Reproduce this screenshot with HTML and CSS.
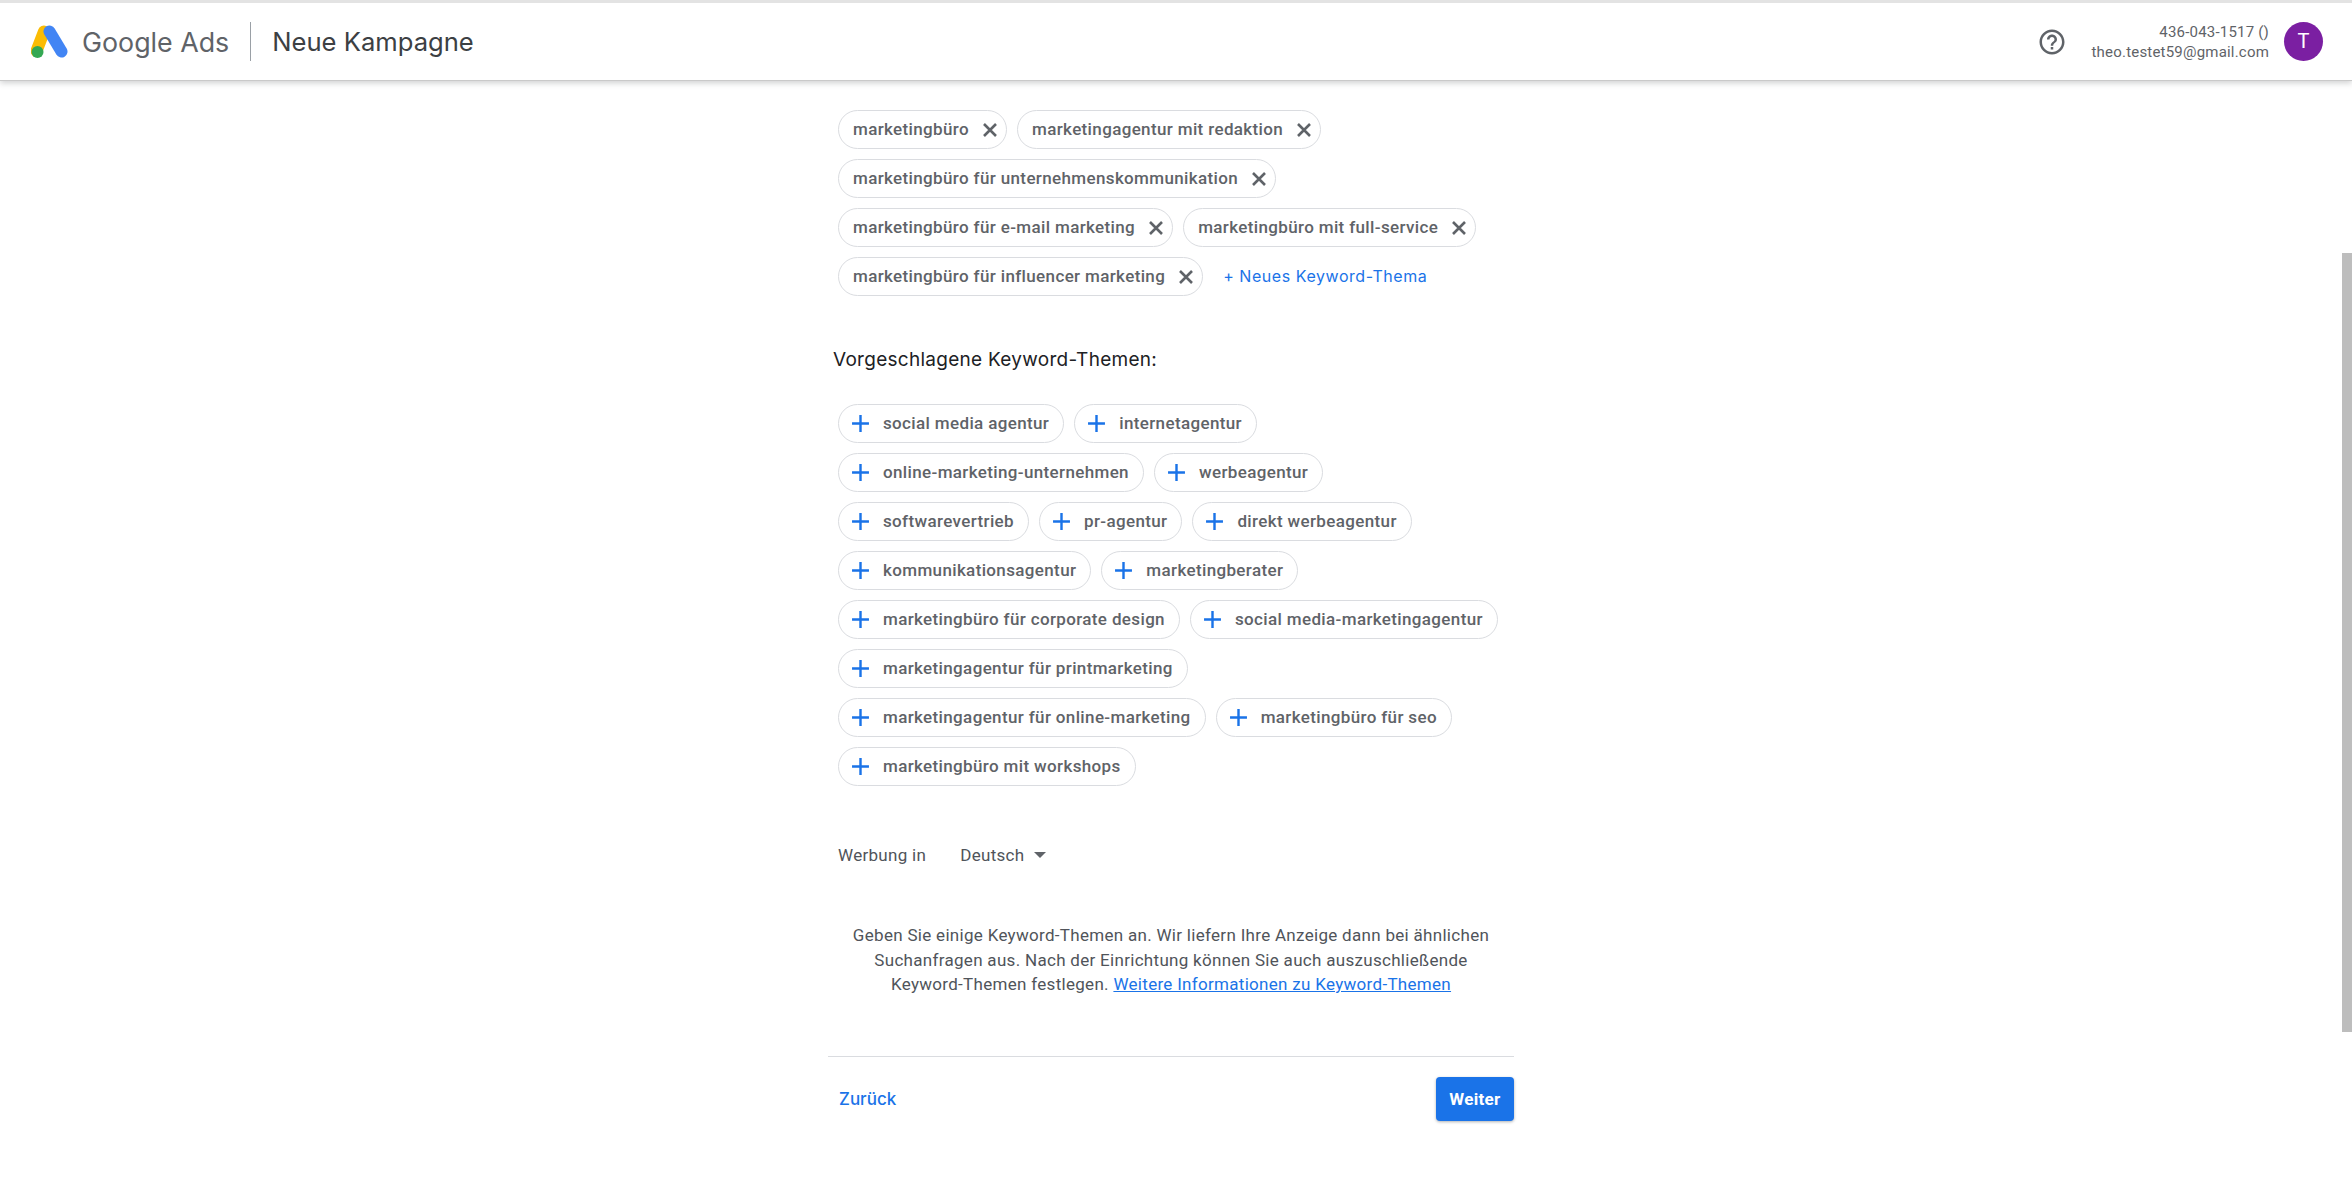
FILE: index.html
```html
<!DOCTYPE html>
<html lang="de">
<head>
  <meta charset="UTF-8">
  <meta name="viewport" content="width=device-width, initial-scale=1.0">
  <title>Neue Kampagne</title>
  <link rel="stylesheet" href="styles.css">
</head>
<body>
  <header class="topbar">
    <svg class="logo" viewBox="0 0 37 33" width="37" height="33">
      <line x1="13" y1="6.5" x2="5.5" y2="26" stroke="#fbbc04" stroke-width="12" stroke-linecap="round"/>
      <line x1="18.5" y1="6.5" x2="30.5" y2="26.5" stroke="#4285f4" stroke-width="12" stroke-linecap="round"/>
      <circle cx="6.5" cy="27" r="6" fill="#34a853"/>
    </svg>
    <span class="brand">Google Ads</span>
    <span class="divider"></span>
    <span class="title">Neue Kampagne</span>
    <svg class="help" viewBox="0 0 24 24" width="30" height="30">
      <path fill="#5f6368" d="M11 18h2v-2h-2v2zm1-16C6.48 2 2 6.48 2 12s4.48 10 10 10 10-4.48 10-10S17.52 2 12 2zm0 18c-4.41 0-8-3.59-8-8s3.59-8 8-8 8 3.59 8 8-3.59 8-8 8zm0-14c-2.21 0-4 1.79-4 4h2c0-1.1.9-2 2-2s2 .9 2 2c0 2-3 1.75-3 5h2c0-2.25 3-2.5 3-5 0-2.21-1.79-4-4-4z"/>
    </svg>
    <div class="account">
      <div>436-043-1517 ()</div>
      <div>theo.testet59@gmail.com</div>
    </div>
    <div class="avatar">T</div>
  </header>

  <div class="scrollbar"></div>

  <main class="content">
    <div class="panel">
      <div class="chips">
        <span class="chip chip-added">marketingbüro<svg viewBox="0 0 24 24" width="24" height="24"><path d="M6 6l12 12M18 6L6 18"/></svg></span>
        <span class="chip chip-added">marketingagentur mit redaktion<svg viewBox="0 0 24 24" width="24" height="24"><path d="M6 6l12 12M18 6L6 18"/></svg></span>
        <span class="chip chip-added">marketingbüro für unternehmenskommunikation<svg viewBox="0 0 24 24" width="24" height="24"><path d="M6 6l12 12M18 6L6 18"/></svg></span>
        <span class="chip chip-added">marketingbüro für e-mail marketing<svg viewBox="0 0 24 24" width="24" height="24"><path d="M6 6l12 12M18 6L6 18"/></svg></span>
        <span class="chip chip-added">marketingbüro mit full-service<svg viewBox="0 0 24 24" width="24" height="24"><path d="M6 6l12 12M18 6L6 18"/></svg></span>
        <span class="chip chip-added">marketingbüro für influencer marketing<svg viewBox="0 0 24 24" width="24" height="24"><path d="M6 6l12 12M18 6L6 18"/></svg></span>
        <a class="new-theme">+ Neues Keyword-Thema</a>
      </div>

      <h2 class="suggest-title">Vorgeschlagene Keyword-Themen:</h2>

      <div class="chips">
        <span class="chip chip-suggest"><svg viewBox="0 0 24 24" width="29" height="29"><path d="M19 13h-6v6h-2v-6H5v-2h6V5h2v6h6z"/></svg>social media agentur</span>
        <span class="chip chip-suggest"><svg viewBox="0 0 24 24" width="29" height="29"><path d="M19 13h-6v6h-2v-6H5v-2h6V5h2v6h6z"/></svg>internetagentur</span>
        <span class="chip chip-suggest"><svg viewBox="0 0 24 24" width="29" height="29"><path d="M19 13h-6v6h-2v-6H5v-2h6V5h2v6h6z"/></svg>online-marketing-unternehmen</span>
        <span class="chip chip-suggest"><svg viewBox="0 0 24 24" width="29" height="29"><path d="M19 13h-6v6h-2v-6H5v-2h6V5h2v6h6z"/></svg>werbeagentur</span>
        <span class="chip chip-suggest"><svg viewBox="0 0 24 24" width="29" height="29"><path d="M19 13h-6v6h-2v-6H5v-2h6V5h2v6h6z"/></svg>softwarevertrieb</span>
        <span class="chip chip-suggest"><svg viewBox="0 0 24 24" width="29" height="29"><path d="M19 13h-6v6h-2v-6H5v-2h6V5h2v6h6z"/></svg>pr-agentur</span>
        <span class="chip chip-suggest"><svg viewBox="0 0 24 24" width="29" height="29"><path d="M19 13h-6v6h-2v-6H5v-2h6V5h2v6h6z"/></svg>direkt werbeagentur</span>
        <span class="chip chip-suggest"><svg viewBox="0 0 24 24" width="29" height="29"><path d="M19 13h-6v6h-2v-6H5v-2h6V5h2v6h6z"/></svg>kommunikationsagentur</span>
        <span class="chip chip-suggest"><svg viewBox="0 0 24 24" width="29" height="29"><path d="M19 13h-6v6h-2v-6H5v-2h6V5h2v6h6z"/></svg>marketingberater</span>
        <span class="chip chip-suggest"><svg viewBox="0 0 24 24" width="29" height="29"><path d="M19 13h-6v6h-2v-6H5v-2h6V5h2v6h6z"/></svg>marketingbüro für corporate design</span>
        <span class="chip chip-suggest"><svg viewBox="0 0 24 24" width="29" height="29"><path d="M19 13h-6v6h-2v-6H5v-2h6V5h2v6h6z"/></svg>social media-marketingagentur</span>
        <span class="chip chip-suggest"><svg viewBox="0 0 24 24" width="29" height="29"><path d="M19 13h-6v6h-2v-6H5v-2h6V5h2v6h6z"/></svg>marketingagentur für printmarketing</span>
        <span class="chip chip-suggest"><svg viewBox="0 0 24 24" width="29" height="29"><path d="M19 13h-6v6h-2v-6H5v-2h6V5h2v6h6z"/></svg>marketingagentur für online-marketing</span>
        <span class="chip chip-suggest"><svg viewBox="0 0 24 24" width="29" height="29"><path d="M19 13h-6v6h-2v-6H5v-2h6V5h2v6h6z"/></svg>marketingbüro für seo</span>
        <span class="chip chip-suggest"><svg viewBox="0 0 24 24" width="29" height="29"><path d="M19 13h-6v6h-2v-6H5v-2h6V5h2v6h6z"/></svg>marketingbüro mit workshops</span>
      </div>

      <div class="language">
        <span>Werbung in</span>
        <span class="language-value">Deutsch<i class="caret"></i></span>
      </div>

      <p class="hint">
        Geben Sie einige Keyword-Themen an. Wir liefern Ihre Anzeige dann bei ähnlichen<br>
        Suchanfragen aus. Nach der Einrichtung können Sie auch auszuschließende<br>
        Keyword-Themen festlegen. <a>Weitere Informationen zu Keyword-Themen</a>
      </p>

      <div class="actions">
        <a class="back">Zurück</a>
        <button class="next">Weiter</button>
      </div>
    </div>
  </main>
</body>
</html>
```

FILE: styles.css
```css
* {
  margin: 0;
  padding: 0;
  box-sizing: border-box;
}
body {
  height: 1177px;
  overflow: hidden;
  background-color: #fff;
  font-family: Roboto, sans-serif;
  color: #5f6368;
}

/* top bar */
.topbar {
  display: flex;
  align-items: center;
  height: 81px;
  padding: 0 29px 0 31px;
  border-top: 3px solid #e3e3e3;
  border-bottom: 1px solid #c9c9c9;
  box-shadow: 0 2px 6px rgba(60, 64, 67, 0.25);
}
.logo {
  flex: none;
}
.brand {
  margin-left: 14px;
  font-family: Inter, sans-serif;
  font-size: 26.8px;
  color: #5f6368;
}
.divider {
  width: 1px;
  height: 39px;
  margin: 0 21px 0 21px;
  background-color: #9aa0a6;
}
.title {
  font-family: Inter, sans-serif;
  font-size: 25.6px;
  color: #3c4043;
}
.help {
  margin-left: auto;
}
.account {
  margin-left: 25px;
  font-size: 15px;
  line-height: 20px;
  letter-spacing: 0.2px;
  text-align: right;
}
.avatar {
  width: 39px;
  height: 39px;
  margin-left: 15px;
  border-radius: 50%;
  background-color: #7b1fa2;
  color: #fff;
  font-size: 20px;
  line-height: 39px;
  text-align: center;
}
.scrollbar {
  position: absolute;
  top: 253px;
  right: 0;
  width: 10px;
  height: 779px;
  background-color: #bdbdbd;
}

/* main column */
.content {
  padding: 29px 10px 0 0;
}
.panel {
  width: 686px;
  margin: 0 auto;
}
.chips {
  display: flex;
  flex-wrap: wrap;
  align-items: center;
  gap: 10px;
  padding-left: 10px;
}
.chip {
  display: inline-flex;
  align-items: center;
  height: 39px;
  padding-bottom: 1px;
  border: 1px solid #dadce0;
  border-radius: 20px;
  font-size: 17px;
  font-weight: 500;
  letter-spacing: 0.36px;
  color: #5f6368;
  white-space: nowrap;
}
.chip svg {
  flex: none;
  margin-bottom: -1px;
}
.chip-added {
  padding-left: 14px;
  padding-right: 4px;
  gap: 9px;
}
.chip-added svg {
  fill: none;
  stroke: #5f6368;
  stroke-width: 2.6;
}
.chip-suggest {
  padding-left: 7px;
  padding-right: 14px;
  gap: 8px;
}
.chip-suggest svg {
  fill: #1a73e8;
}
.new-theme {
  margin-bottom: 2px;
  margin-left: 10px;
  font-family: Inter, sans-serif;
  font-size: 16px;
  font-weight: 400;
  letter-spacing: 0.55px;
  color: #1a73e8;
}
.suggest-title {
  margin: 50px 0 30px 5px;
  font-family: Inter, sans-serif;
  font-size: 19px;
  line-height: 28px;
  font-weight: 400;
  letter-spacing: 0.28px;
  color: #202124;
}
.language {
  display: flex;
  align-items: center;
  gap: 34px;
  margin: 57px 0 0 10px;
  font-size: 17px;
  line-height: 24px;
  letter-spacing: 0.3px;
  color: #50545a;
}
.language-value {
  display: flex;
  align-items: center;
  gap: 10px;
}
.caret {
  width: 0;
  height: 0;
  border-left: 6px solid transparent;
  border-right: 6px solid transparent;
  border-top: 6px solid #5f6368;
}
.hint {
  margin-top: 56px;
  font-size: 17px;
  line-height: 24.5px;
  letter-spacing: 0.3px;
  text-align: center;
  color: #50545a;
}
.hint a {
  color: #1a73e8;
  text-decoration: underline;
}
.actions {
  display: flex;
  align-items: center;
  justify-content: space-between;
  margin-top: 59px;
  padding-top: 20px;
  border-top: 1px solid #dadce0;
}
.back {
  margin-left: 11px;
  font-family: Inter, sans-serif;
  font-size: 17px;
  font-weight: 500;
  color: #1a73e8;
}
.next {
  width: 78px;
  height: 44px;
  border: 0;
  border-radius: 4px;
  background-color: #1a73e8;
  box-shadow: 0 1px 3px rgba(60, 64, 67, 0.4);
  font-family: Roboto, sans-serif;
  font-size: 17px;
  font-weight: 700;
  letter-spacing: 0.3px;
  color: #fff;
}
```
